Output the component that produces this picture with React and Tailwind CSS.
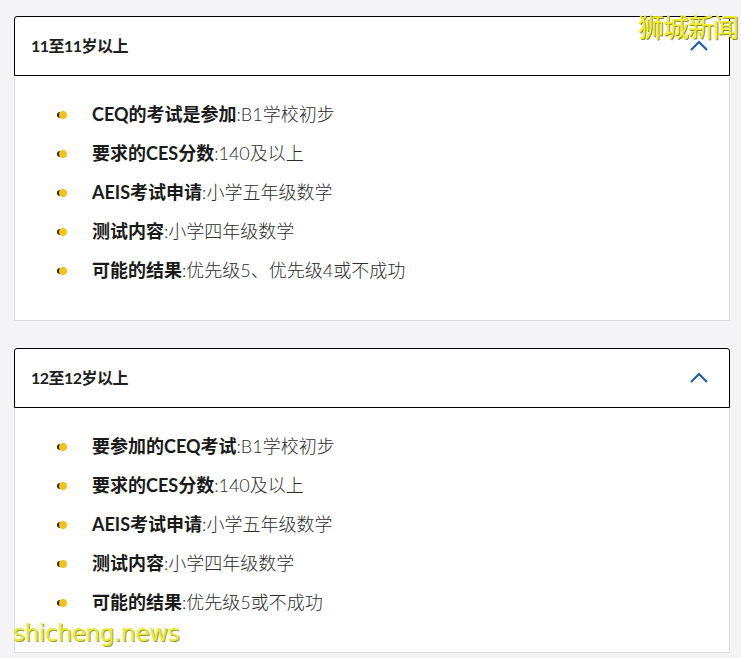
const cards = [
  {
    title: "11至11岁以上",
    items: [
      ["CEQ的考试是参加", "B1学校初步"],
      ["要求的CES分数", "140及以上"],
      ["AEIS考试申请", "小学五年级数学"],
      ["测试内容", "小学四年级数学"],
      ["可能的结果", "优先级5、优先级4或不成功"],
    ],
  },
  {
    title: "12至12岁以上",
    items: [
      ["要参加的CEQ考试", "B1学校初步"],
      ["要求的CES分数", "140及以上"],
      ["AEIS考试申请", "小学五年级数学"],
      ["测试内容", "小学四年级数学"],
      ["可能的结果", "优先级5或不成功"],
    ],
  },
];

const Bullet = () => (
  <span className="relative w-[11px] h-[8px] shrink-0">
    <span className="absolute left-0 top-[1px] w-[6px] h-[6px] rounded-full bg-[#2a2a2a]" />
    <span className="absolute left-[2px] top-0 w-[8px] h-[8px] rounded-full bg-[#f2c318]" />
  </span>
);

const Chevron = () => (
  <svg width="20" height="12" viewBox="0 0 20 12" fill="none">
    <path d="M2 10 L10 2 L18 10" stroke="#1f5fa8" strokeWidth="2.2" />
  </svg>
);

const Card = ({ title, items }) => (
  <div className="flex flex-col">
    <div className="h-[60px] flex items-center justify-between pl-[16px] pr-[20px] bg-white border border-black rounded-t-[3px]">
      <span className="text-[16px] font-bold text-[#1e1e1e] tracking-[-0.5px]">{title}</span>
      <Chevron />
    </div>
    <div className="bg-white border border-t-0 border-[#dcdcdc] pl-[42px] pt-[19px] pb-[30px] flex flex-col">
      {items.map(([k, v]) => (
        <div key={k} className="h-[39px] flex items-center gap-[24px] text-[18px] text-[#2c2c2c]">
          <Bullet />
          <span>
            <b className="font-bold text-[#1a1a1a]">{k}</b>
            <span className="font-light">:{v}</span>
          </span>
        </div>
      ))}
    </div>
  </div>
);

export default function App() {
  return (
    <div
      className="relative w-[741px] h-[658px] bg-[#f4f4f6] px-[14px] pt-[16px] overflow-hidden"
      style={{ fontFamily: 'Lato, "Noto Sans CJK SC", sans-serif' }}
    >
      <div className="w-[716px] flex flex-col gap-[27px]">
        <Card {...cards[0]} />
        <Card {...cards[1]} />
      </div>
      <span
        className="absolute right-[3px] top-[14px] text-[26px] leading-none text-[#f3ee2a] tracking-[-1px]"
        style={{ textShadow: "1px 1px 0 #8a8a20" }}
      >
        狮城新闻
      </span>
      <span
        className="absolute left-[13px] top-[622px] text-[23px] leading-none text-[#eaea30] tracking-[-0.3px]"
        style={{ fontFamily: '"DejaVu Sans", sans-serif', textShadow: "1px 1px 0 #9a9a30" }}
      >
        shicheng.news
      </span>
    </div>
  );
}
